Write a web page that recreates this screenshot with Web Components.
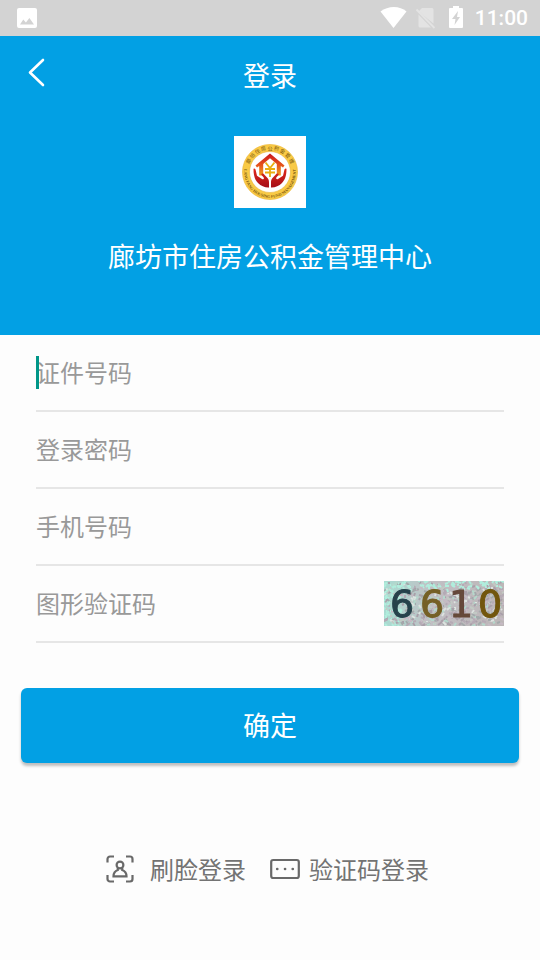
<!DOCTYPE html>
<html lang="zh-CN">
<head>
<meta charset="UTF-8">
<meta name="viewport" content="width=device-width, initial-scale=1">
<title>登录</title>
<style>
    :root {
        --blue: #02a0e4;
        --grey: #d3d3d3;
        --line: #e6e6e6;
        --hint: #999;
        --link: #737373;
    }
    body {
        margin: 0;
        min-height: 100vh;
        background-color: #fdfdfd;
        font-family: "Noto Sans CJK SC", sans-serif;
    }
</style>
</head>
<body>
<login-page></login-page>

<script>
class StatusBar extends HTMLElement {
    connectedCallback() {
        const shadow = this.attachShadow({mode: 'open'});
        shadow.innerHTML = `
            <style>
                :host {
                    display: flex;
                    align-items: center;
                    justify-content: space-between;
                    height: 36px;
                    padding: 0 12px 0 15px;
                    background-color: var(--grey);
                    color: #fff;
                    font-family: Roboto, sans-serif;
                    font-weight: 500;
                    font-size: 21px;
                    line-height: 36px;
                }
                .right {
                    display: flex;
                    align-items: center;
                    gap: 11px;
                }
                svg {
                    display: block;
                }
            </style>
            <svg width="24" height="24" viewBox="0 0 24 24">
                <path fill="#fff" fill-rule="evenodd" d="M4 2h16a2 2 0 0 1 2 2v16a2 2 0 0 1-2 2H4a2 2 0 0 1-2-2V4a2 2 0 0 1 2-2zM5 18.500h14l-4.600-6.500-3.500 4.600-2.600-3z"/>
            </svg>
            <div class="right">
                <svg width="84" height="24" viewBox="0 0 84 24" fill="#fff">
                    <path d="M0.500 5.500C8-0.500 20-0.500 26.500 5.500L13.500 22z"/>
                    <path fill="#e3e3e3" d="M42 2h10a1.500 1.500 0 0 1 1.500 1.500v14L38.500 5.500zM38.500 8.500L51 21.500H40a1.500 1.500 0 0 1-1.500-1.500z"/>
                    <path stroke="#e3e3e3" stroke-width="1.800" d="M36.500 3.500L54.500 22"/>
                    <path fill-rule="evenodd" d="M73 0h6v2h3a1 1 0 0 1 1 1v18a1 1 0 0 1-1 1H70a1 1 0 0 1-1-1V3a1 1 0 0 1 1-1h3zM78 5l-6 8h3.500l-1 6 5.500-8h-3z"/>
                </svg>
                <slot></slot>
            </div>`;
    }
}

class FundLogo extends HTMLElement {
    connectedCallback() {
        const shadow = this.attachShadow({mode: 'open'});
        shadow.innerHTML = `
            <style>
                :host {
                    display: block;
                    width: 72px;
                    height: 72px;
                    background-color: #fff;
                }
                svg {
                    display: block;
                }
                text {
                    font-family: "Noto Sans CJK SC", sans-serif;
                    font-size: 5px;
                    fill: #76540f;
                }
                .en {
                    font-family: "Liberation Serif", serif;
                    font-size: 4px;
                    font-weight: bold;
                }
            </style>
            <svg width="72" height="72" viewBox="0 0 72 72" aria-hidden="true">
                <defs>
                    <linearGradient id="red" x1="0" y1="0" x2="0" y2="1">
                        <stop offset="0" stop-color="#e0281c"/>
                        <stop offset="1" stop-color="#a50f18"/>
                    </linearGradient>
                    <linearGradient id="house" x1="0" y1="0" x2="0" y2="1">
                        <stop offset="0" stop-color="#c8141c"/>
                        <stop offset="0.500" stop-color="#e4501c"/>
                        <stop offset="1" stop-color="#f0a020"/>
                    </linearGradient>
                    <path id="top" d="M15 43A22.200 22.200 0 1 1 57 43"/>
                    <path id="bottom" d="M10.700 31A25.800 25.800 0 1 0 61.300 31"/>
                    <path id="hand" fill="url(#red)" d="M19.500 33c1-1 2 0 2.200 1.200l1.300 5.600 5 3.200c1.500.8 2.500-.7 1.500-1.800l-2-2.200c-.7-1.500 1-2 2-1.200l4 4.200c1.500 1.800 1.500 3.500 1.500 5v4.500c-4 .2-8-1.500-11-4.500-3.500-3.500-4.500-8.500-4.500-14z"/>
                </defs>
                <circle cx="36" cy="36" r="27.500" fill="#f9ca45" stroke="#ecb93c" stroke-width="0.700"/>
                <circle cx="36" cy="36" r="20.500" fill="#fff" stroke="#e8b640" stroke-width="0.600"/>
                <text><textPath href="#top" startOffset="50%" text-anchor="middle">廊 坊 住 房 公 积 金 管 理</textPath></text>
                <text class="en"><textPath href="#bottom" startOffset="50%" text-anchor="middle">LANG FANG HOUSING FUND MANAGEMENT</textPath></text>
                <path fill="url(#house)" d="M36 17.500L50.500 29.500 49 31.500 46.800 30V39.500H42.800V28L36 22.300 29.200 28V39.500H25.200V30L23 31.500 21.500 29.500z"/>
                <path fill="none" stroke="#e9ae12" stroke-width="1.800" d="M31.500 26.500l4.500 5.500 4.500-5.500M36 32v9M31 33h10M31 36.500h10"/>
                <use href="#hand"/>
                <use href="#hand" transform="matrix(-1 0 0 1 72 0)"/>
            </svg>`;
    }
}

class LoginHeader extends HTMLElement {
    connectedCallback() {
        const shadow = this.attachShadow({mode: 'open'});
        shadow.innerHTML = `
            <style>
                :host {
                    display: block;
                    padding-bottom: 59px;
                    background-color: var(--blue);
                    color: #fff;
                    font-size: 27px;
                    line-height: 40px;
                }
                .bar {
                    display: grid;
                    grid-template-columns: 72px 1fr 72px;
                    align-items: center;
                    height: 78px;
                }
                button {
                    height: 72px;
                    padding: 0 0 6px 27px;
                    border: 0;
                    background: none;
                    color: inherit;
                }
                svg {
                    display: block;
                }
                h1, p {
                    margin: 0;
                    font-size: inherit;
                    font-weight: normal;
                    text-align: center;
                }
                fund-logo {
                    margin: 22px auto 28px;
                }
            </style>
            <div class="bar">
                <button type="button" aria-label="返回">
                    <svg width="20" height="30" viewBox="0 0 20 30" fill="none" stroke="currentColor" stroke-width="2.600" stroke-linecap="round" stroke-linejoin="round">
                        <path d="M16 3L3 15.500 16 28"/>
                    </svg>
                </button>
                <h1><slot name="title"></slot></h1>
            </div>
            <fund-logo></fund-logo>
            <p><slot></slot></p>`;
    }
}

class FormField extends HTMLElement {
    connectedCallback() {
        const shadow = this.attachShadow({mode: 'open'});
        const hint = this.getAttribute('hint');
        shadow.innerHTML = `
            <style>
                :host {
                    display: flex;
                    align-items: center;
                    position: relative;
                    height: 75px;
                    border-bottom: 2px solid var(--line);
                }
                input {
                    flex: 1;
                    box-sizing: border-box;
                    min-width: 0;
                    height: 44px;
                    padding: 0 0 2px;
                    border: 0;
                    outline: 0;
                    background: none;
                    color: #333;
                    font-family: inherit;
                    font-size: 24px;
                }
                input::placeholder {
                    color: var(--hint);
                    opacity: 1;
                }
                /* text cursor of the active field */
                :host([active])::before {
                    content: "";
                    position: absolute;
                    left: 0;
                    top: 21px;
                    width: 3px;
                    height: 33px;
                    background-color: #009688;
                }
            </style>
            <input type="${this.getAttribute('type') || 'text'}" placeholder="${hint}" aria-label="${hint}">
            <slot></slot>`;
    }
}

class CaptchaImage extends HTMLElement {
    connectedCallback() {
        const shadow = this.attachShadow({mode: 'open'});
        const tones = ['#b4d8cc', '#b5aab5', '#c6bac4', '#a3a9ab', '#dde3e0', '#a99fa9', '#c2c9c4'];
        let seed = 17;
        const next = () => (seed = (seed * 16807) % 2147483647) / 2147483647;
        let specks = '';
        for (let i = 0; i < 650; i++) {
            const x = Math.floor(next() * 120);
            const y = Math.floor(next() * 45);
            // the upper and left edges are greener than the middle
            const green = y < 9 || x < 18;
            const tone = green && next() < 0.7 ? '#b0eedd' : tones[Math.floor(next() * tones.length)];
            specks += `<path stroke="${tone}" d="M${x} ${y}l${Math.floor(next() * 9) - 4} ${Math.floor(next() * 7) - 3}"/>`;
        }
        shadow.innerHTML = `
            <style>
                :host {
                    display: block;
                }
                svg {
                    display: block;
                }
                text {
                    font-family: "DejaVu Sans", sans-serif;
                    font-size: 38px;
                    stroke-width: 1;
                }
            </style>
            <svg width="120" height="45" viewBox="0 0 120 45">
                <defs>
                    <linearGradient id="bg">
                        <stop offset="0" stop-color="#a9dcd2"/>
                        <stop offset="0.400" stop-color="#c1bfc4"/>
                        <stop offset="1" stop-color="#bcb6b7"/>
                    </linearGradient>
                    <filter id="soft"><feGaussianBlur stdDeviation="0.700"/></filter>
                </defs>
                <rect width="120" height="45" fill="url(#bg)"/>
                <g filter="url(#soft)" stroke-width="2">${specks}</g>
                <g filter="url(#soft)">
                    <text x="6" y="36" fill="#26434c" stroke="#26434c">6</text>
                    <text x="36" y="36" fill="#756026" stroke="#756026">6</text>
                    <text x="65" y="36" fill="#65483a" stroke="#65483a">1</text>
                    <text x="94" y="36" fill="#725711" stroke="#725711">0</text>
                </g>
            </svg>`;
    }
}

class SubmitButton extends HTMLElement {
    connectedCallback() {
        const shadow = this.attachShadow({mode: 'open'});
        shadow.innerHTML = `
            <style>
                :host {
                    display: block;
                }
                button {
                    display: block;
                    width: 100%;
                    height: 75px;
                    padding: 0 0 2px;
                    border: 0;
                    border-radius: 6px;
                    background-color: var(--blue);
                    box-shadow: 0 3px 3px rgba(0, 0, 0, 0.25);
                    color: #fff;
                    font-family: inherit;
                    font-size: 27px;
                }
            </style>
            <button type="button"><slot></slot></button>`;
    }
}

class LoginLink extends HTMLElement {
    connectedCallback() {
        const shadow = this.attachShadow({mode: 'open'});
        const icons = {
            face: `
                <svg width="36" height="30" viewBox="0 0 36 30">
                    <path d="M2.500 8.500V5a2.500 2.500 0 0 1 2.500-2.500H9M21 2.500h4a2.500 2.500 0 0 1 2.500 2.500V8.500M27.500 21v4a2.500 2.500 0 0 1-2.500 2.500H21M9 27.500H5a2.500 2.500 0 0 1-2.500-2.500V21"/>
                    <circle cx="15" cy="11" r="3.400"/>
                    <path d="M12.800 14v2C10 17 8.500 19 8.500 22.300h13c0-3.300-1.500-5.300-4.300-6.300v-2"/>
                </svg>`,
            code: `
                <svg width="30" height="30" viewBox="0 0 30 30">
                    <rect x="1.200" y="6" width="27.600" height="18" rx="2"/>
                    <path stroke-width="2.600" stroke-linecap="round" d="M7.200 15h.1M15 15h.1M22.700 15h.1"/>
                </svg>`
        };
        shadow.innerHTML = `
            <style>
                :host {
                    display: block;
                }
                a {
                    display: flex;
                    align-items: center;
                    gap: 9px;
                    color: var(--link);
                    font-size: 24px;
                    line-height: 36px;
                    white-space: nowrap;
                    text-decoration: none;
                }
                svg {
                    display: block;
                    fill: none;
                    stroke: #696969;
                    stroke-width: 2.200;
                }
            </style>
            <a href="#${this.getAttribute('icon')}">${icons[this.getAttribute('icon')]}<span><slot></slot></span></a>`;
    }
}

class LoginPage extends HTMLElement {
    connectedCallback() {
        const shadow = this.attachShadow({mode: 'open'});
        shadow.innerHTML = `
            <style>
                :host {
                    display: block;
                }
                form {
                    padding: 0 36px;
                }
                submit-button {
                    margin: 45px 21px 0;
                }
                nav {
                    display: flex;
                    justify-content: center;
                    gap: 24px;
                    padding: 88px 6px 72px 0;
                }
            </style>
            <status-bar>11:00</status-bar>
            <login-header>
                <span slot="title">登录</span>
                廊坊市住房公积金管理中心
            </login-header>
            <form>
                <form-field hint="证件号码" active></form-field>
                <form-field hint="登录密码" type="password"></form-field>
                <form-field hint="手机号码" type="tel"></form-field>
                <form-field hint="图形验证码"><captcha-image></captcha-image></form-field>
            </form>
            <submit-button>确定</submit-button>
            <nav>
                <login-link icon="face">刷脸登录</login-link>
                <login-link icon="code">验证码登录</login-link>
            </nav>`;
    }
}

customElements.define('status-bar', StatusBar);
customElements.define('fund-logo', FundLogo);
customElements.define('login-header', LoginHeader);
customElements.define('form-field', FormField);
customElements.define('captcha-image', CaptchaImage);
customElements.define('submit-button', SubmitButton);
customElements.define('login-link', LoginLink);
customElements.define('login-page', LoginPage);
</script>
</body>
</html>
